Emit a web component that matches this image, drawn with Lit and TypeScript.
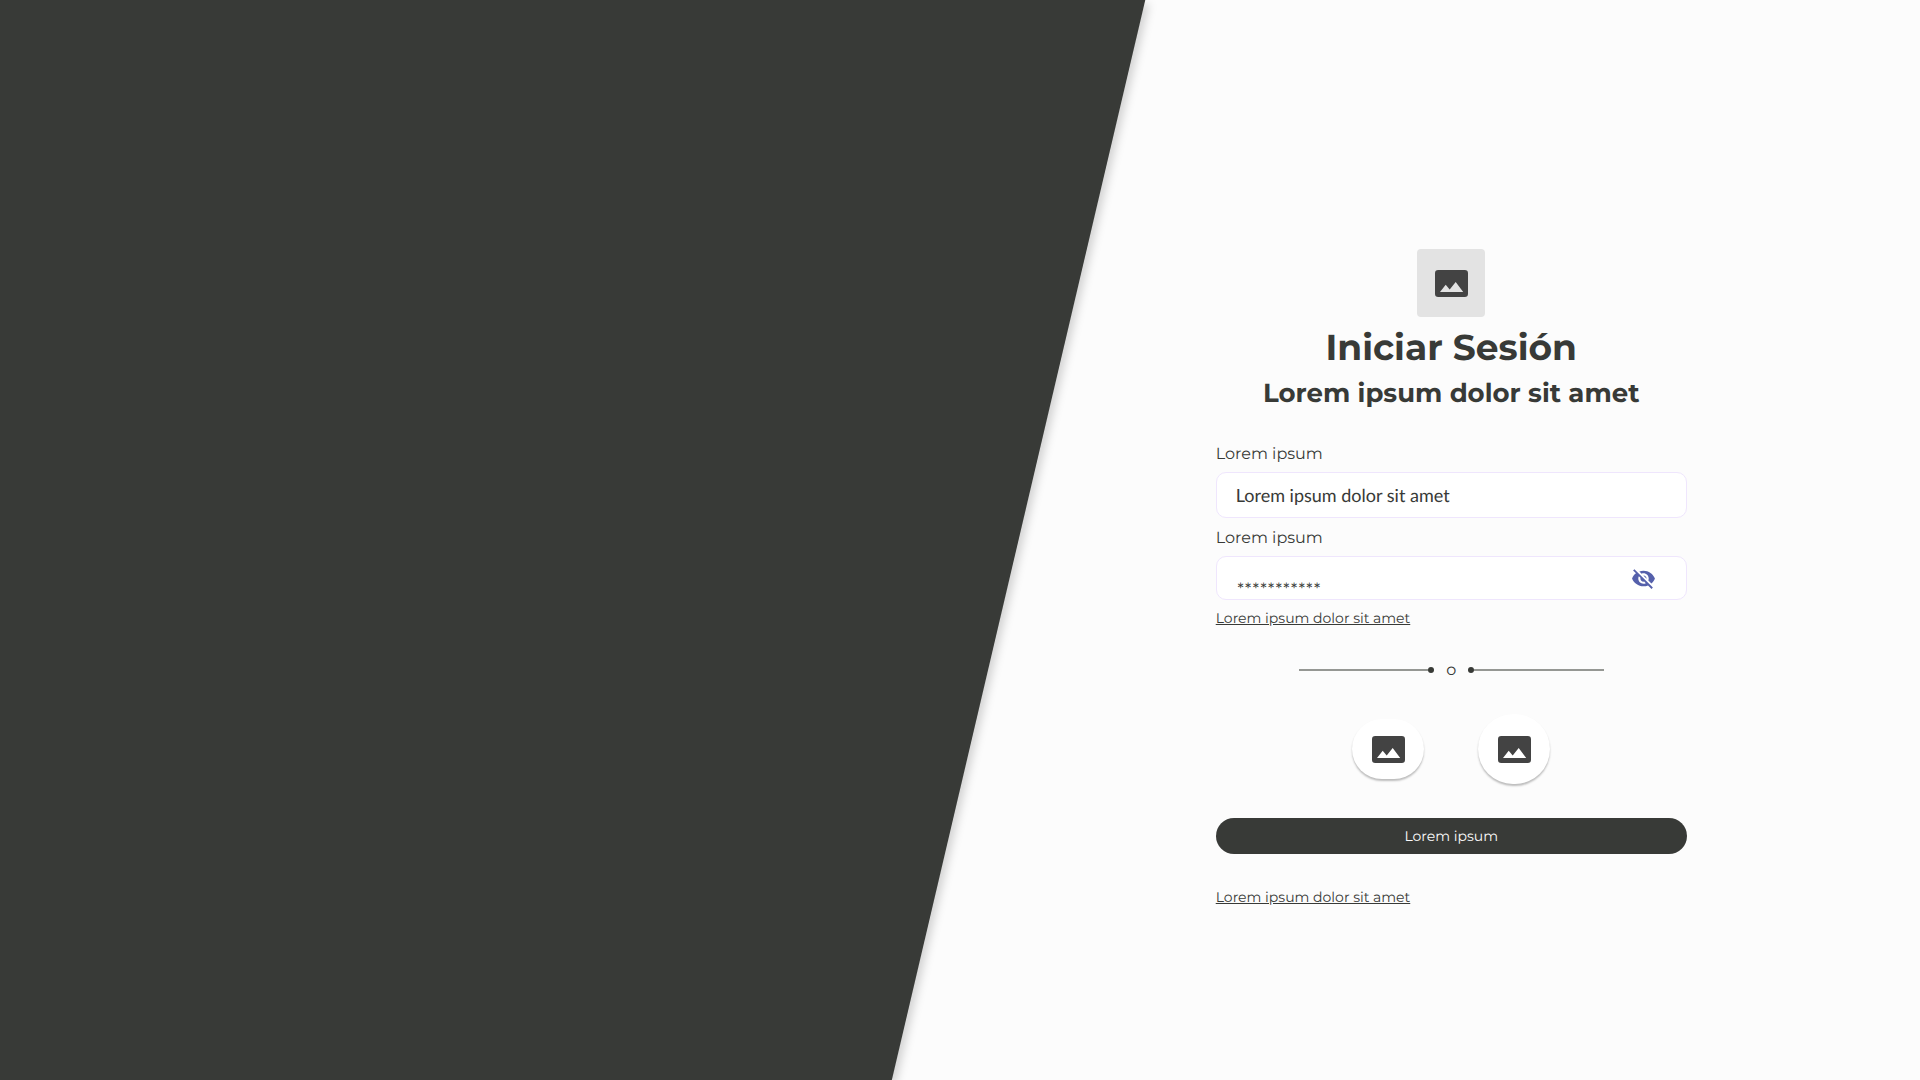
import { LitElement, html, css, svg } from "lit";
import { customElement, property, state } from "lit/decorators.js";

@customElement("picture-icon")
class PictureIcon extends LitElement {
  static styles = css`
    :host {
      display: block;
      width: 33px;
      height: 27px;
    }
    .icon {
      display: block;
      width: 100%;
      height: 100%;
    }
  `;

  render() {
    return html`<svg class="icon" viewBox="0 0 33 27" aria-hidden="true">
      <path
        fill="#434343"
        fill-rule="evenodd"
        d="M3.2 0H29.8A3.2 3.2 0 0 1 33 3.2V23.8A3.2 3.2 0 0 1 29.8 27H3.2A3.2 3.2 0 0 1 0 23.8V3.2A3.2 3.2 0 0 1 3.2 0ZM5 22H28.2L20.7 12L14.7 19.6L10.7 14.7Z"
      />
    </svg>`;
  }
}

@customElement("or-divider")
class OrDivider extends LitElement {
  @property() text = "o";

  static styles = css`
    :host {
      display: flex;
      align-items: center;
      justify-content: center;
      gap: 12px;
    }
    .rule {
      flex: 1;
      display: flex;
      align-items: center;
    }
    .line {
      flex: 1;
      height: 2px;
      background: #959793;
    }
    .dot {
      width: 6px;
      height: 6px;
      border-radius: 50%;
      background: #383a36;
    }
    .word {
      padding-top: 2px;
      font-size: 16px;
      line-height: 20px;
    }
  `;

  render() {
    return html`
      <span class="rule"><span class="line"></span><span class="dot"></span></span>
      <span class="word">${this.text}</span>
      <span class="rule"><span class="dot"></span><span class="line"></span></span>
    `;
  }
}

@customElement("app-root")
class AppRoot extends LitElement {
  @state() private masked = true;

  static styles = css`
    :host {
      display: block;
      position: relative;
      min-height: 100vh;
      overflow: hidden;
      background: #fcfcfc;
      color: #383a37;
      font-family: Montserrat, Inter, sans-serif;
      text-rendering: geometricPrecision;
    }
    * {
      box-sizing: border-box;
    }
    .backdrop {
      position: absolute;
      inset: 0;
      filter: drop-shadow(4px 4px 4px rgba(0, 0, 0, 0.16));
    }
    .shape {
      height: 100%;
      background: #383a37;
      clip-path: polygon(0 0, 59.65% 0, 46.45% 100%, 0 100%);
    }
    .page {
      position: relative;
      display: flex;
      justify-content: center;
      margin-left: 51.17%;
      padding: 249px 24px 48px;
    }
    .form {
      display: flex;
      flex-direction: column;
      width: 100%;
      max-width: 471px;
    }
    .logo {
      display: grid;
      place-items: center;
      align-self: center;
      width: 68px;
      height: 68px;
      border-radius: 4px;
      background: #e3e3e3;
    }
    .title,
    .subtitle {
      margin: 0;
      text-align: center;
      font-weight: 700;
    }
    .title {
      margin-top: 9px;
      font-size: 36px;
      line-height: 44px;
    }
    .subtitle {
      margin-top: 7px;
      font-size: 26px;
      line-height: 32px;
    }
    .fields {
      display: flex;
      flex-direction: column;
      margin-top: 36px;
    }
    .label {
      font-size: 16px;
      line-height: 20px;
      margin-bottom: 7px;
    }
    .field {
      display: flex;
      align-items: center;
      border: 1px solid #efe6fd;
      border-radius: 10px;
      background: #ffffff;
      height: 46px;
      padding: 0 30px 0 19px;
      margin-bottom: 11px;
    }
    .secret {
      height: 44px;
      padding-left: 20px;
      margin-bottom: 8px;
    }
    .input {
      flex: 1;
      min-width: 0;
      height: 100%;
      padding: 0;
      border: 0;
      outline: 0;
      background: none;
      color: #383a37;
      font: 18px Lato, sans-serif;
      text-rendering: inherit;
    }
    .secret .input {
      padding-top: 22px;
    }
    .eye {
      display: block;
      padding: 0;
      border: 0;
      background: none;
      color: #5560ab;
      cursor: pointer;
    }
    .glyph {
      display: block;
      fill: currentColor;
    }
    .link {
      align-self: flex-start;
      color: #383a37;
      font-size: 14px;
      line-height: 20px;
    }
    .divider {
      align-self: center;
      width: 305px;
      margin-top: 31px;
    }
    .social {
      display: flex;
      align-items: center;
      justify-content: center;
      gap: 54px;
      margin-top: 33px;
    }
    .provider {
      display: grid;
      place-items: center;
      width: 72px;
      height: 60px;
      padding: 0;
      border: 0;
      border-radius: 30px;
      background: #ffffff;
      box-shadow: 0 2px 2px rgba(0, 0, 0, 0.25);
      cursor: pointer;
    }
    .round {
      height: 70px;
      border-radius: 36px;
    }
    .submit {
      height: 36px;
      margin: 34px 0 33px;
      border: 0;
      border-radius: 18px;
      background: #383a37;
      color: #fcfcfc;
      font: inherit;
      font-size: 14px;
      text-rendering: inherit;
      cursor: pointer;
    }
  `;

  private toggle() {
    this.masked = !this.masked;
  }

  render() {
    return html`
      <div class="backdrop"><div class="shape"></div></div>
      <main class="page">
        <form class="form" @submit=${(e: Event) => e.preventDefault()}>
          <div class="logo"><picture-icon></picture-icon></div>
          <h1 class="title">Iniciar Sesión</h1>
          <h2 class="subtitle">Lorem ipsum dolor sit amet</h2>

          <div class="fields">
            <label class="label" for="user">Lorem ipsum</label>
            <div class="field">
              <input class="input" id="user" type="text" value="Lorem ipsum dolor sit amet" />
            </div>
            <label class="label" for="secret">Lorem ipsum</label>
            <div class="field secret">
              <input class="input" id="secret" type="text" value="***********" autocomplete="off" />
              <button class="eye" type="button" aria-pressed=${this.masked} @click=${this.toggle}>
                <svg class="glyph" viewBox="0 0 24 24" width="25" height="25" aria-hidden="true">
                  ${svg`<path d="M12 7c2.76 0 5 2.24 5 5 0 .65-.13 1.26-.36 1.83l2.92 2.92c1.51-1.26 2.7-2.89 3.43-4.75-1.73-4.39-6-7.5-11-7.5-1.4 0-2.74.25-3.98.7l2.16 2.16C10.74 7.13 11.35 7 12 7zM2 4.27l2.28 2.28.46.46C3.08 8.3 1.78 10.02 1 12c1.73 4.39 6 7.5 11 7.5 1.55 0 3.03-.3 4.38-.84l.42.42L19.73 22 21 20.73 3.27 3 2 4.27zM7.53 9.8l1.55 1.55c-.05.21-.08.43-.08.65 0 1.66 1.34 3 3 3 .22 0 .44-.03.65-.08l1.55 1.55c-.67.33-1.41.53-2.2.53-2.76 0-5-2.24-5-5 0-.79.2-1.53.53-2.2zm4.31-.78l3.15 3.15.02-.16c0-1.66-1.34-3-3-3l-.17.01z" />`}
                </svg>
              </button>
            </div>
            <a class="link" href="#">Lorem ipsum dolor sit amet</a>
          </div>

          <or-divider class="divider"></or-divider>

          <div class="social">
            <button class="provider" type="button"><picture-icon></picture-icon></button>
            <button class="provider round" type="button"><picture-icon></picture-icon></button>
          </div>

          <button class="submit" type="submit">Lorem ipsum</button>
          <a class="link" href="#">Lorem ipsum dolor sit amet</a>
        </form>
      </main>
    `;
  }
}
